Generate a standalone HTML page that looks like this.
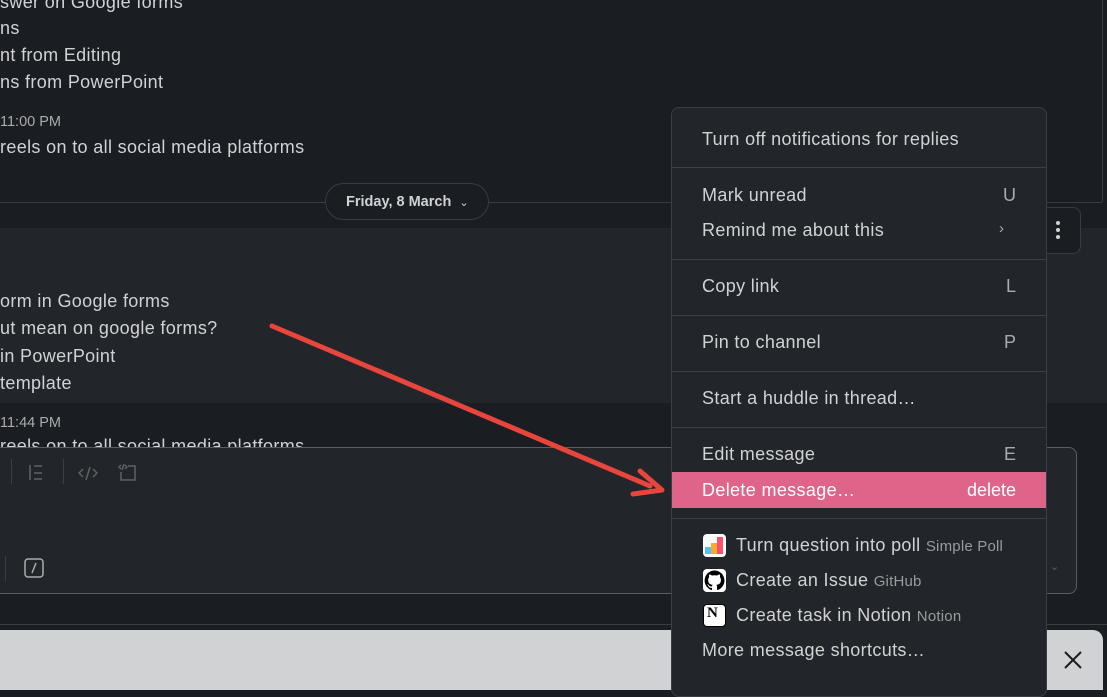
<!DOCTYPE html>
<html><head><meta charset="utf-8"><style>
*{margin:0;padding:0;box-sizing:border-box}
body{width:1107px;height:683px;overflow:hidden;background:#1a1d21;font-family:"Liberation Sans",sans-serif;color:#d1d2d3;position:relative}
.a{position:absolute;white-space:nowrap}
.t{font-size:18px;letter-spacing:0.35px;color:#d1d2d3}
.ts{font-size:14.5px;color:#ababad}
.menu{position:absolute;left:671px;top:107px;width:376px;height:590px;background:#222529;border:1px solid #3b3e43;border-radius:8px}
.mi{position:absolute;left:30px;font-size:18px;letter-spacing:0.35px;color:#d1d2d3;white-space:nowrap}
.k{position:absolute;right:30px;font-size:18px;color:#ababad}
.sep{position:absolute;left:0;right:0;height:1px;background:#3b3e43}
.sub{font-size:15px;letter-spacing:0.2px;color:#9a9b9d}
.ic{position:absolute;left:31px;width:23px;height:23px;border-radius:4px;background:#fff}
</style></head><body>
<div class="a t" style="left:0;top:-8px">swer on Google forms</div>
<div class="a t" style="left:0;top:18px">ns</div>
<div class="a t" style="left:0;top:45px">nt from Editing</div>
<div class="a t" style="left:0;top:72px">ns from PowerPoint</div>
<div class="a ts" style="left:0;top:114px">11:00 PM</div>
<div class="a t" style="left:0;top:137px">reels on to all social media platforms</div>
<div class="a" style="left:0;top:202px;width:1102px;height:1px;background:#393b3f"></div>
<div class="a" style="left:1102px;top:0;width:1px;height:202px;background:#393b3f"></div>
<div class="a" style="left:0;top:228px;width:1107px;height:175px;background:#222529"></div>
<div class="a" style="left:325px;top:183px;width:164px;height:37px;border:1px solid #393b3f;border-radius:19px;background:#1a1d21;font-size:14.5px;font-weight:bold;color:#d1d2d3;padding:10px 0 0 20px">Friday, 8 March <span style="font-weight:normal;font-size:11px;margin-left:4px">&#8964;</span></div>
<div class="a" style="left:1030px;top:207px;width:51px;height:47px;border:1px solid #393b3f;border-radius:8px;background:#1a1d21"></div>
<div class="a" style="left:1056px;top:221px;width:4px;height:4px;border-radius:2px;background:#d1d2d3;box-shadow:0 7px 0 #d1d2d3,0 14px 0 #d1d2d3"></div>
<div class="a t" style="left:0;top:291px">orm in Google forms</div>
<div class="a t" style="left:0;top:318px">ut mean on google forms?</div>
<div class="a t" style="left:0;top:346px">in PowerPoint</div>
<div class="a t" style="left:0;top:373px">template</div>
<div class="a ts" style="left:0;top:415px">11:44 PM</div>
<div class="a t" style="left:0;top:436px;height:11px;overflow:hidden">reels on to all social media platforms</div>
<div class="a" style="left:-10px;top:447px;width:1087px;height:147px;background:#222529;border:1px solid #5a5c5f;border-radius:8px"></div>
<div class="a" style="left:11px;top:459px;width:1px;height:25px;background:#3b3e43"></div>
<div class="a" style="left:63px;top:459px;width:1px;height:25px;background:#3b3e43"></div>
<svg class="a" style="left:28px;top:463px" width="20" height="20" fill="none" stroke="#5f6164" stroke-width="1.5"><path d="M2 2v15M6 3h8M6 10h8M6 16h8"/></svg>
<svg class="a" style="left:78px;top:464px" width="20" height="18" fill="none" stroke="#5f6164" stroke-width="1.5"><path d="M5 5l-4 4 4 4M15 5l4 4-4 4M12 3l-4 13"/></svg>
<svg class="a" style="left:118px;top:463px" width="20" height="20" fill="none" stroke="#5f6164" stroke-width="1.5"><path d="M10 3h7v14H3V9"/><path d="M3 2L1 4l2 2M7 2l2 2-2 2M6 1L4 7"/></svg>
<div class="a" style="left:5px;top:556px;width:1px;height:25px;background:#3b3e43"></div>
<svg class="a" style="left:24px;top:558px" width="20" height="20" fill="none" stroke="#ababad" stroke-width="1.5"><rect x="1" y="1" width="18" height="18" rx="3"/><path d="M12 5l-4 10"/></svg>
<div class="a" style="left:1050px;top:560px;font-size:11px;color:#5f6164">&#8964;</div>
<div class="a" style="left:0;top:624px;width:1107px;height:1px;background:#3b3e43"></div>
<div class="a" style="left:0;top:630px;width:1103px;height:60px;background:#d1d2d3;border-radius:0 10px 0 0"></div>
<svg class="a" style="left:1063px;top:650px" width="20" height="20" stroke="#1d1c1d" stroke-width="2"><path d="M2 2l16 16M18 2L2 18"/></svg>
<div class="menu">
<div class="mi" style="top:21px">Turn off notifications for replies</div>
<div class="sep" style="top:59px"></div>
<div class="mi" style="top:77px">Mark unread</div><div class="k" style="top:77px">U</div>
<div class="mi" style="top:112px">Remind me about this</div><div class="k" style="top:112px;right:42px;font-size:15px">&#8250;</div>
<div class="sep" style="top:151px"></div>
<div class="mi" style="top:168px">Copy link</div><div class="k" style="top:168px">L</div>
<div class="sep" style="top:207px"></div>
<div class="mi" style="top:224px">Pin to channel</div><div class="k" style="top:224px">P</div>
<div class="sep" style="top:263px"></div>
<div class="mi" style="top:280px">Start a huddle in thread…</div>
<div class="sep" style="top:319px"></div>
<div class="mi" style="top:336px">Edit message</div><div class="k" style="top:336px">E</div>
<div style="position:absolute;left:0;right:0;top:364px;height:36px;background:#de6589"></div>
<div class="mi" style="top:372px;color:#fff">Delete message…</div><div class="k" style="top:372px;color:#fff">delete</div>
<div class="sep" style="top:410px"></div>
<div class="ic" style="top:426px;background:#fff"><div style="position:absolute;left:2px;bottom:3px;width:6px;height:7px;background:#4fc3f7"></div><div style="position:absolute;left:8px;bottom:3px;width:6px;height:11px;background:#ffa726"></div><div style="position:absolute;left:14px;bottom:3px;width:6px;height:17px;background:#ff4f6d"></div></div>
<div class="mi" style="top:427px;left:64px">Turn question into poll <span class="sub">Simple Poll</span></div>
<div class="ic" style="top:461px;background:#fff"><svg width="23" height="23" viewBox="0 0 16 16" style="position:absolute;left:0;top:0"><path fill="#000" d="M8 1a7 7 0 0 0-2.2 13.6c.35.06.48-.15.48-.34v-1.2c-1.95.42-2.36-.94-2.36-.94-.32-.8-.78-1.02-.78-1.02-.64-.44.05-.43.05-.43.7.05 1.07.72 1.07.72.63 1.07 1.64.76 2.04.58.06-.45.24-.76.44-.94-1.55-.18-3.18-.78-3.18-3.46 0-.76.27-1.39.72-1.88-.07-.18-.31-.89.07-1.85 0 0 .59-.19 1.92.72a6.6 6.6 0 0 1 3.5 0c1.33-.91 1.92-.72 1.92-.72.38.96.14 1.67.07 1.85.45.49.72 1.12.72 1.88 0 2.69-1.64 3.28-3.2 3.45.25.22.48.65.48 1.3v1.94c0 .19.13.4.48.34A7 7 0 0 0 8 1z"/></svg></div>
<div class="mi" style="top:462px;left:64px">Create an Issue <span class="sub">GitHub</span></div>
<div class="ic" style="top:496px;background:#fff;border:1.5px solid #000"><div style="position:absolute;left:3px;top:0;font:bold 15px 'Liberation Serif',serif;color:#000">N</div></div>
<div class="mi" style="top:497px;left:64px">Create task in Notion <span class="sub">Notion</span></div>
<div class="mi" style="top:532px">More message shortcuts…</div>
</div>
<svg class="a" style="left:0;top:0" width="1107" height="683"><path d="M272 326L650 486" stroke="#e8453c" stroke-width="5" stroke-linecap="round"/><path d="M640 471L662 490 633 494" fill="none" stroke="#e8453c" stroke-width="5" stroke-linecap="round" stroke-linejoin="round"/></svg>
</body></html>
